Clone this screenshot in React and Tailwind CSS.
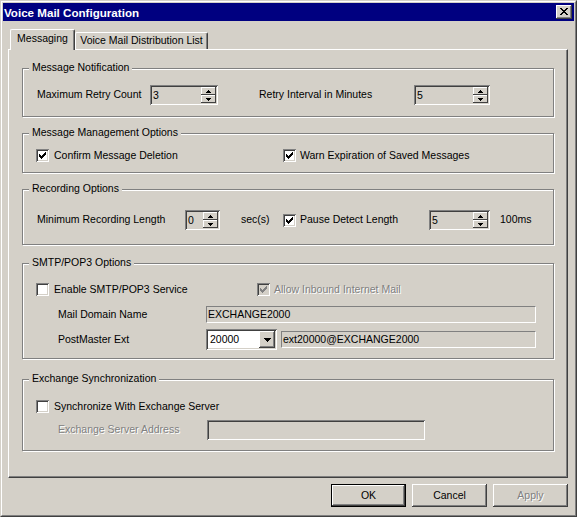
import React from "react";

const sunken =
  "shadow-[inset_1px_1px_0_#808080,inset_-1px_-1px_0_#ffffff,inset_2px_2px_0_#404040,inset_-2px_-2px_0_#d4d0c8]";
const raised =
  "shadow-[inset_-1px_-1px_0_#404040,inset_1px_1px_0_#ffffff,inset_-2px_-2px_0_#808080]";
const smallRaised = "shadow-[inset_-1px_-1px_0_#404040,inset_1px_1px_0_#ffffff]";
const disabledText = "text-[#808080] [text-shadow:1px_1px_0_#ffffff]";

function Pixels({ w, h, rects, color = "#000" }) {
  return (
    <svg width={w} height={h} viewBox={`0 0 ${w} ${h}`} shapeRendering="crispEdges">
      {rects.map(([x, y, rw, rh], i) => (
        <rect key={i} x={x} y={y} width={rw} height={rh} fill={color} />
      ))}
    </svg>
  );
}

function CheckMark({ color }) {
  return (
    <Pixels
      w={7}
      h={7}
      color={color}
      rects={[
        [0, 2, 1, 3],
        [1, 3, 1, 3],
        [2, 4, 1, 3],
        [3, 3, 1, 3],
        [4, 2, 1, 3],
        [5, 1, 1, 3],
        [6, 0, 1, 3],
      ]}
    />
  );
}

function Check({ checked, disabled }) {
  return (
    <div
      className={`flex h-[13px] w-[13px] shrink-0 items-center justify-center ${
        disabled ? "bg-[#d4d0c8]" : "bg-white"
      } ${sunken}`}
    >
      {checked && <CheckMark color={disabled ? "#808080" : "#000000"} />}
    </div>
  );
}

function UpArrow() {
  return <Pixels w={5} h={3} rects={[[2, 0, 1, 1], [1, 1, 3, 1], [0, 2, 5, 1]]} />;
}
function DownArrow() {
  return <Pixels w={5} h={3} rects={[[0, 0, 5, 1], [1, 1, 3, 1], [2, 2, 1, 1]]} />;
}

function Spin({ className, value }) {
  return (
    <div className={`flex h-[20px] shrink-0 bg-[#d4d0c8] p-[2px] ${sunken} ${className}`}>
      <div className="flex-1 pl-[1px] leading-[16px]">{value}</div>
      <div className="flex w-[15px] flex-col">
        <div className={`flex h-[8px] items-center justify-center bg-[#d4d0c8] ${smallRaised}`}>
          <UpArrow />
        </div>
        <div className={`flex h-[8px] items-center justify-center bg-[#d4d0c8] ${smallRaised}`}>
          <DownArrow />
        </div>
      </div>
    </div>
  );
}

function FlatField({ className, value }) {
  return (
    <div
      className={`h-[17px] shrink-0 border border-t-[#808080] border-l-[#808080] border-b-white border-r-white bg-[#d4d0c8] pl-[1px] leading-[15px] ${className}`}
    >
      {value}
    </div>
  );
}

function Combo({ value }) {
  return (
    <div className={`flex h-[21px] w-[71px] shrink-0 bg-white p-[2px] ${sunken}`}>
      <div className="flex-1 pl-[2px] leading-[17px]">{value}</div>
      <div className={`flex h-[17px] w-[16px] items-center justify-center bg-[#d4d0c8] ${raised}`}>
        <Pixels w={7} h={4} rects={[[0, 0, 7, 1], [1, 1, 5, 1], [2, 2, 3, 1], [3, 3, 1, 1]]} />
      </div>
    </div>
  );
}

function Group({ title, className, children }) {
  return (
    <div
      className={`relative ml-[13px] w-[532px] shrink-0 border border-[#808080] shadow-[inset_1px_1px_0_#ffffff,1px_1px_0_#ffffff] ${className}`}
    >
      <div className="absolute left-[6px] top-[-8px] bg-[#d4d0c8] px-[3px] leading-[13px]">{title}</div>
      {children}
    </div>
  );
}

function Button({ children, def, disabled }) {
  return (
    <div
      className={`flex h-[23px] w-[75px] items-center justify-center bg-[#d4d0c8] ${
        def ? "border border-black" : ""
      } ${raised} ${disabled ? disabledText : ""}`}
    >
      {children}
    </div>
  );
}

export default function App() {
  return (
    <div className="h-[517px] w-[577px] border border-t-[#d4d0c8] border-l-[#d4d0c8] border-r-[#404040] border-b-[#404040] bg-[#d4d0c8] font-['Liberation_Sans',Arial,sans-serif] text-[10.5px] text-black">
      <div className="flex h-full flex-col border border-t-white border-l-white border-r-[#808080] border-b-[#808080] p-px">
        {/* Title bar */}
        <div className="flex h-[18px] shrink-0 items-center justify-between bg-[#000080] pl-[1px] pr-[2px]">
          <span className="text-[11.6px] font-bold leading-[13px] text-white">Voice Mail Configuration</span>
          <div className={`flex h-[14px] w-[16px] items-center justify-center bg-[#d4d0c8] pb-px pr-px ${raised}`}>
            <Pixels
              w={8}
              h={7}
              rects={[
                [0, 0, 2, 1],
                [6, 0, 2, 1],
                [1, 1, 2, 1],
                [5, 1, 2, 1],
                [2, 2, 4, 1],
                [3, 3, 2, 1],
                [2, 4, 4, 1],
                [1, 5, 2, 1],
                [5, 5, 2, 1],
                [0, 6, 2, 1],
                [6, 6, 2, 1],
              ]}
            />
          </div>
        </div>

        {/* Tabs */}
        <div className="ml-[5px] mt-[8px] flex h-[20px] shrink-0 items-end">
          <div className="relative z-10 -mb-px ml-[2px] flex h-[21px] w-[65px] items-center justify-center rounded-t-[2px] border border-b-0 border-t-white border-l-white border-r-[#404040] bg-[#d4d0c8] pb-[3px] shadow-[inset_-1px_0_0_#808080]">
            Messaging
          </div>
          <div className="flex h-[17px] w-[133px] items-center justify-center rounded-t-[2px] border border-b-0 border-t-white border-l-white border-r-[#404040] bg-[#d4d0c8] shadow-[inset_-1px_0_0_#808080]">
            Voice Mail Distribution List
          </div>
        </div>

        {/* Panel */}
        <div className="ml-[5px] flex h-[429px] w-[560px] shrink-0 flex-col border border-t-white border-l-white border-r-[#404040] border-b-[#404040] shadow-[inset_-1px_-1px_0_#808080]">
          <Group title="Message Notification" className="mt-[18px] h-[49px]">
            <div className="mt-[16px] flex h-[20px] items-center pl-[14px]">
              <span className="w-[113px] shrink-0">Maximum Retry Count</span>
              <Spin className="w-[68px]" value="3" />
              <span className="ml-[41px] w-[155px] shrink-0">Retry Interval in Minutes</span>
              <Spin className="w-[76px]" value="5" />
            </div>
          </Group>

          <Group title="Message Management Options" className="mt-[16px] h-[40px]">
            <div className="mt-[15px] flex h-[13px] items-center pl-[13px]">
              <Check checked />
              <span className="ml-[5px] w-[229px] shrink-0">Confirm Message Deletion</span>
              <Check checked />
              <span className="ml-[4px]">Warn Expiration of Saved Messages</span>
            </div>
          </Group>

          <Group title="Recording Options" className="mt-[16px] h-[56px]">
            <div className="mt-[20px] flex h-[20px] items-center pl-[14px]">
              <span className="w-[148px] shrink-0">Minimum Recording Length</span>
              <Spin className="w-[35px]" value="0" />
              <span className="ml-[21px] w-[42px] shrink-0">sec(s)</span>
              <Check checked />
              <span className="ml-[4px] w-[129px] shrink-0">Pause Detect Length</span>
              <Spin className="w-[61px]" value="5" />
              <span className="ml-[10px]">100ms</span>
            </div>
          </Group>

          <Group title="SMTP/POP3 Options" className="mt-[18px] h-[96px]">
            <div className="mt-[19px] flex h-[13px] items-center pl-[13px]">
              <Check />
              <span className="ml-[5px] w-[203px] shrink-0">Enable SMTP/POP3 Service</span>
              <Check checked disabled />
              <span className={`ml-[4px] ${disabledText}`}>Allow Inbound Internet Mail</span>
            </div>
            <div className="mt-[10px] flex h-[17px] items-center pl-[35px]">
              <span className="w-[148px] shrink-0">Mail Domain Name</span>
              <FlatField className="w-[330px]" value="EXCHANGE2000" />
            </div>
            <div className="mt-[6px] flex h-[21px] items-center pl-[35px]">
              <span className="w-[148px] shrink-0">PostMaster Ext</span>
              <Combo value="20000" />
              <FlatField className="ml-[4px] w-[255px]" value="ext20000@EXCHANGE2000" />
            </div>
          </Group>

          <Group title="Exchange Synchronization" className="mt-[20px] h-[72px]">
            <div className="mt-[20px] flex h-[13px] items-center pl-[13px]">
              <Check />
              <span className="ml-[5px]">Synchronize With Exchange Server</span>
            </div>
            <div className="mt-[7px] flex h-[20px] items-center pl-[35px]">
              <span className={`w-[149px] shrink-0 ${disabledText}`}>Exchange Server Address</span>
              <div className={`h-[20px] w-[218px] shrink-0 bg-[#d4d0c8] ${sunken}`} />
            </div>
          </Group>
        </div>

        {/* Buttons */}
        <div className="ml-[5px] mt-[6px] flex w-[560px] shrink-0 justify-end gap-[6px]">
          <Button def>OK</Button>
          <Button>Cancel</Button>
          <Button disabled>Apply</Button>
        </div>
      </div>
    </div>
  );
}
